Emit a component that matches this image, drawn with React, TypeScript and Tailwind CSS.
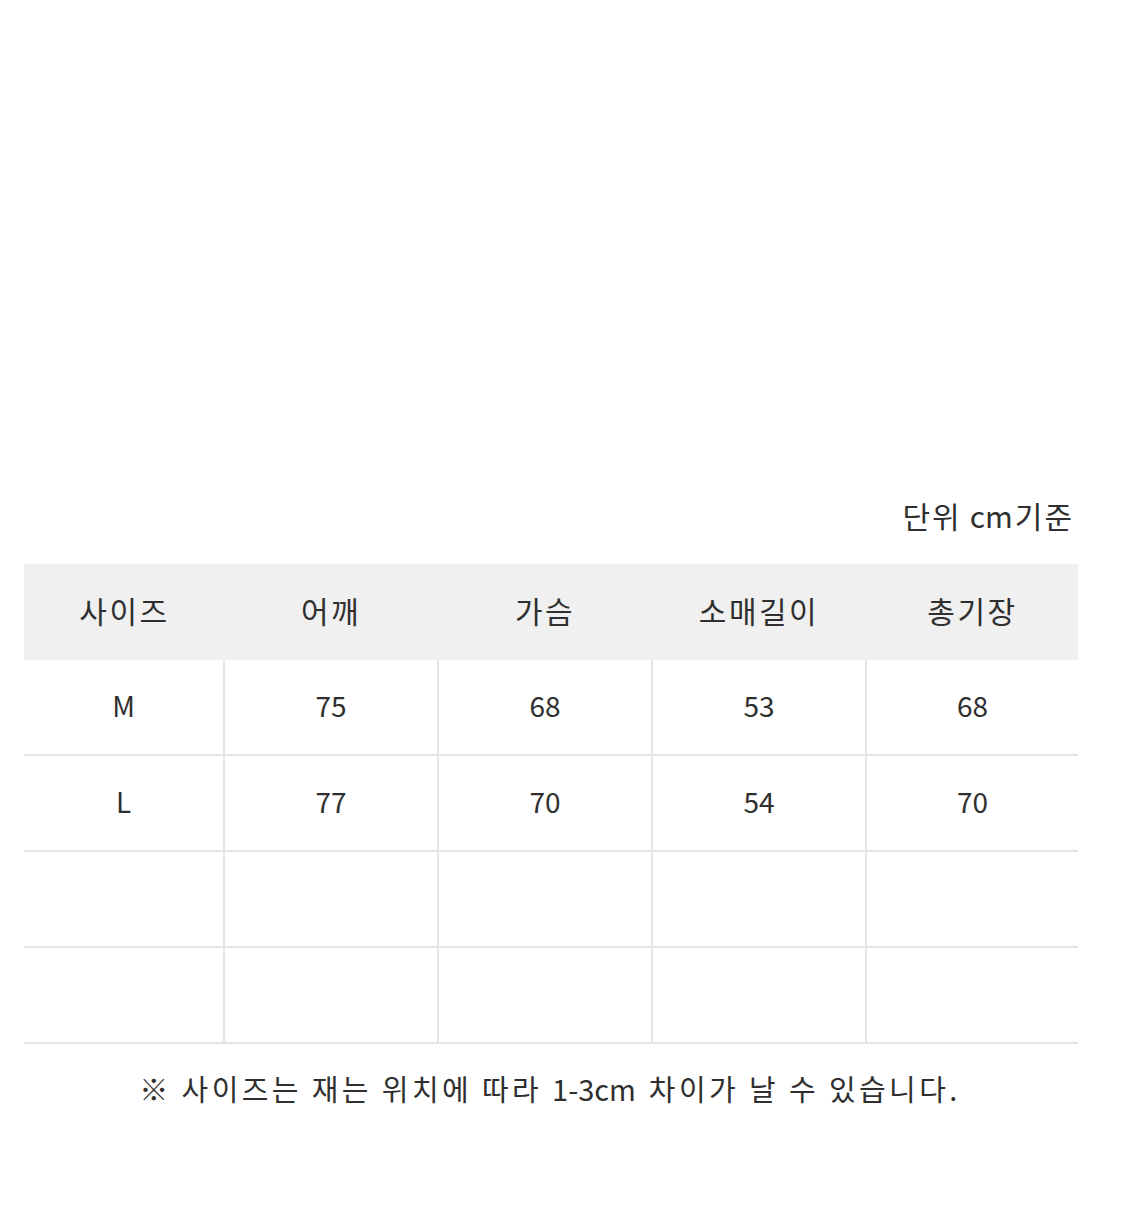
const headers = ['사이즈', '어깨', '가슴', '소매길이', '총기장']

const rows = [
  ['M', '75', '68', '53', '68'],
  ['L', '77', '70', '54', '70'],
  ['', '', '', '', ''],
  ['', '', '', '', ''],
]

export default function App() {
  return (
    <div
      className="min-h-[1209px] w-[1125px] bg-white text-[#2f2f2f] pt-[492px]"
      style={{ fontFamily: '"Noto Sans CJK KR", "Noto Sans", sans-serif' }}
    >
      <div className="ml-[24px] w-[1054px]">
        {/* 단위 */}
        <div className="flex justify-end pr-[4px] h-[46px] items-center text-[30px] leading-none tracking-[2px]">
          단위<span className="tracking-normal ml-[8px] mr-[2px]">cm</span>기준
        </div>

        <div className="mt-[26px]">
          {/* header */}
          <div className="grid grid-cols-[199px_214px_214px_214px_213px] h-[96px] bg-[#f0f0f0]">
            {headers.map((h) => (
              <div
                key={h}
                className="flex items-center justify-center pb-[4px] text-[30px] tracking-[2.5px] indent-[2px]"
              >
                {h}
              </div>
            ))}
          </div>

          {rows.map((row, i) => (
            <div
              key={i}
              className="grid grid-cols-[199px_214px_214px_214px_213px] h-[96px] border-b-2 border-[#e4e4e4]"
            >
              {row.map((cell, j) => (
                <div
                  key={j}
                  className={
                    'flex items-center justify-center pb-[4px] text-[28px] ' +
                    (j > 0 ? 'border-l-2 border-[#e4e4e4]' : '')
                  }
                >
                  {cell}
                </div>
              ))}
            </div>
          ))}
        </div>

        <p className="mt-[30px] text-center text-[29px] leading-none tracking-[3.4px] pr-[2px]">
          ※ 사이즈는 재는 위치에 따라 <span className="tracking-normal mr-[3px]">1-3cm</span> 차이가 날 수 있습니다.
        </p>
      </div>
    </div>
  )
}
